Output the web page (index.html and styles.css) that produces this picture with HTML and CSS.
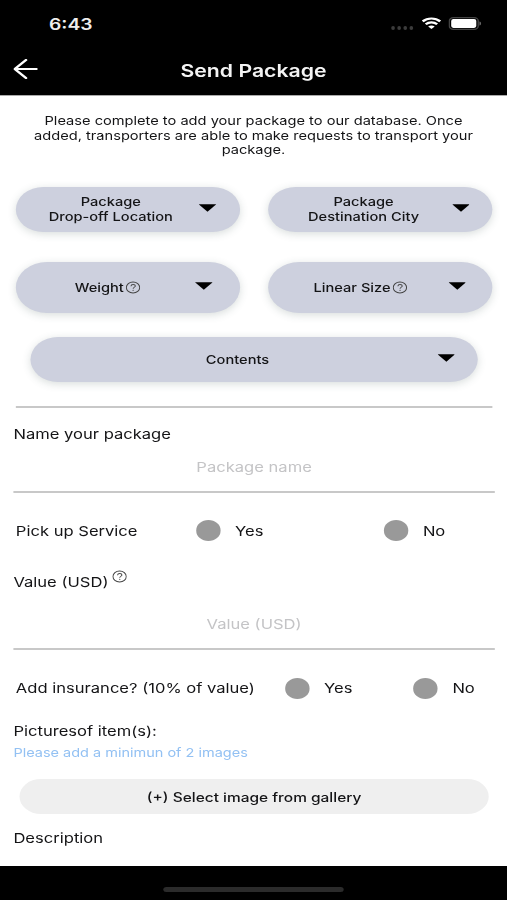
FILE: index.html
```html
<!DOCTYPE html>
<html lang="en">
<head>
<meta charset="utf-8">
<title>Send Package</title>
<link rel="stylesheet" href="styles.css">
</head>
<body>
<svg class="defs" width="0" height="0" aria-hidden="true">
  <symbol id="help" viewBox="0 0 13 13">
    <circle cx="6.5" cy="6.5" r="5.8" fill="none" stroke="currentColor" stroke-width=".9"/>
    <path d="M4.7 5.1C4.8 3.8 5.6 3.3 6.6 3.3c1.1 0 1.9.7 1.9 1.6 0 1.3-1.9 1.4-1.9 2.9" fill="none" stroke="currentColor" stroke-width=".9"/>
    <circle cx="6.6" cy="9.4" r=".6" fill="currentColor"/>
  </symbol>
  <symbol id="caret" viewBox="0 0 15 8"><path d="M0 0h15L7.5 8z"/></symbol>
</svg>
<div class="screen">
  <header class="top">
    <div class="status">
      <span class="time">6:43</span>
      <div class="signals">
        <span class="dots"><i></i><i></i><i></i><i></i></span>
        <svg class="wifi" viewBox="0 0 16 12" fill="none" stroke="#fff" stroke-width="2.2">
          <path d="M.8 4.4C4.9.5 11.1.5 15.2 4.4M3.3 7.3c2.7-2.5 6.7-2.5 9.4 0"/>
          <path d="M8 12 5.3 9.4c1.5-1.3 3.9-1.3 5.4 0z" fill="#fff" stroke="none"/>
        </svg>
        <svg class="battery" viewBox="0 0 27 13">
          <rect x=".6" y=".6" width="23.8" height="11.8" rx="3.4" fill="none" stroke="#444" stroke-width="1.2"/>
          <rect x="2.2" y="2.1" width="20.6" height="8.8" rx="1.8" fill="#fff"/>
          <path d="M25.4 4.5c1.8.6 1.8 3.4 0 4z" fill="#666"/>
        </svg>
      </div>
    </div>
    <div class="nav">
      <svg class="back" viewBox="0 0 20 20" fill="none" stroke="#fff" stroke-width="2.2" stroke-linecap="round" stroke-linejoin="round"><path d="M10.3 1 1.1 10l9.2 9M1.3 10H19"/></svg>
      <h1 class="title">Send Package</h1>
    </div>
  </header>
  <main class="form">
    <p class="intro">Please complete to add your package to our database. Once<br>added, transporters are able to make requests to transport your<br>package.</p>
    <div class="pills">
      <div class="pill"><span class="label">Package<br>Drop-off Location</span><svg class="caret"><use href="#caret"/></svg></div>
      <div class="pill"><span class="label">Package<br>Destination City</span><svg class="caret"><use href="#caret"/></svg></div>
    </div>
    <div class="pills tall">
      <div class="pill"><span class="label">Weight<svg class="help"><use href="#help"/></svg></span><svg class="caret"><use href="#caret"/></svg></div>
      <div class="pill"><span class="label">Linear Size<svg class="help"><use href="#help"/></svg></span><svg class="caret"><use href="#caret"/></svg></div>
    </div>
    <div class="pill wide"><span class="label">Contents</span><svg class="caret"><use href="#caret"/></svg></div>
    <hr class="divider">
    <div class="field">
      <div class="name">Name your package</div>
      <div class="input">Package name</div>
    </div>
    <div class="options pickup">
      <span class="question">Pick up Service</span>
      <i class="radio"></i><span class="answer">Yes</span>
      <i class="radio"></i><span class="answer last">No</span>
    </div>
    <div class="field value">
      <div class="name">Value (USD)<svg class="help"><use href="#help"/></svg></div>
      <div class="input">Value (USD)</div>
    </div>
    <div class="options insurance">
      <span class="question">Add insurance? (10% of value)</span>
      <i class="radio"></i><span class="answer">Yes</span>
      <i class="radio"></i><span class="answer last">No</span>
    </div>
    <div class="pictures">Picturesof item(s):</div>
    <div class="hint">Please add a minimun of 2 images</div>
    <div class="gallery">(+) Select image from gallery</div>
    <div class="description">Description</div>
  </main>
  <footer class="bottom"><span class="home"></span></footer>
</div>
</body>
</html>
```
FILE: styles.css
```css
* { box-sizing: border-box; }
body { margin: 0; width: 507px; height: 900px; overflow: hidden; background: #fff; }
.defs { display: block; height: 0; }

/* 416-unit wide phone screen, widened to fill the window */
.screen {
  width: 416px;
  height: 900px;
  display: flex;
  flex-direction: column;
  transform: scaleX(1.21875);
  transform-origin: 0 0;
  font-family: Inter, "Liberation Sans", sans-serif;
  color: #141416;
}

.top { height: 95px; background: #000; color: #fff; }
.status { height: 46px; padding: 2px 21px 0 40.2px; display: flex; justify-content: space-between; align-items: center; }
.time { font-size: 15.8px; font-weight: 600; color: #eee; }
.signals { display: flex; align-items: center; }
.dots { display: flex; gap: 2px; margin: 7px 7px 0 0; }
.dots i { width: 3px; height: 4px; border-radius: 50%; background: #3c3c3c; }
.wifi { width: 16px; height: 12px; margin: -2px 6px 0 0; }
.battery { width: 27px; height: 13px; margin-top: -2px; }
.nav { height: 48px; display: grid; grid-template-columns: 40px 1fr 40px; align-items: center; }
.back { width: 20px; height: 20px; margin: -2px 0 0 11px; }
.title { margin: 2px 0 0; text-align: center; font-size: 17.4px; font-weight: 600; line-height: 22px; color: #f4f4f4; }

.form { height: 771px; border-top: 1px solid #aaa; overflow: hidden; }
.intro { margin: 18px 0 0; text-align: center; font-size: 12px; line-height: 14.5px; white-space: nowrap; }

.pills { display: flex; gap: 23.5px; margin: 29px 12px 0 12.6px; }
.pill {
  width: 184px;
  height: 45.5px;
  display: flex;
  align-items: center;
  border-radius: 26px;
  background: #cdd0de;
  box-shadow: 0 2px 8px rgba(60, 85, 80, .2);
}
.label { width: 116px; margin: 1px 0 0 20.3px; text-align: center; font-size: 12px; line-height: 14.5px; font-weight: 500; white-space: nowrap; }
.caret { width: 14.5px; height: 8px; margin: -3px 0 0 14.3px; fill: #000; }
.tall { margin-top: 29.5px; }
.tall .pill { height: 51.5px; }
.tall .label { margin-left: 17.8px; }
.tall .caret { margin-left: 14px; }
.help { width: 12.3px; height: 13px; margin-left: 1.6px; vertical-align: -2px; color: #444; }
.wide { width: 367.6px; height: 45px; margin: 23.5px 0 0 24.6px; }
.wide .label { width: 300px; margin-top: 3px; }
.wide .caret { margin-left: 14px; }
.divider { height: 2px; margin: 24px 12.3px 0 13px; border: 0; background: #c8c8c8; }

.field { height: 69.5px; margin: 15.5px 10px 0 11px; padding-top: 1px; border-bottom: 2px solid #c8c8c8; }
.name, .question, .answer, .pictures, .description { font-size: 13.6px; line-height: 20px; white-space: nowrap; }
.input { margin-top: 13px; text-align: center; color: #c4c4c6; font-size: 13.6px; line-height: 20px; }
.pickup { margin-top: 27.5px; }
.options { display: flex; align-items: center; height: 21px; padding-left: 13px; }
.options > * { flex-shrink: 0; }
.radio { width: 20.3px; height: 21px; border-radius: 50%; background: #999; }
.answer { padding-left: 12px; }
.pickup .question { width: 147.6px; }
.pickup .answer { width: 133.8px; }
.value { height: 79px; margin-top: 30px; }
.value .help { margin-left: 3px; vertical-align: 4px; margin-top: -4px; }
.value .input { margin-top: 22px; }
.insurance { margin-top: 27.5px; }
.insurance .question { width: 220.6px; }
.insurance .answer { width: 85px; }
.options .last { width: auto; }
.pictures { margin: 22px 0 0 11px; }
.hint { margin: 3px 0 0 11px; color: #93c1f3; font-size: 11.9px; line-height: 17px; white-space: nowrap; }
.gallery { height: 35.5px; margin: 18px 15px 0 16px; padding-top: 1px; border-radius: 18px; background: #efefef; text-align: center; font-size: 12.7px; font-weight: 500; line-height: 35.5px; }
.description { margin: 14px 0 0 11px; }

.bottom { height: 34px; padding-top: 21px; background: #000; }
.home { display: block; width: 148px; height: 5px; margin: 0 auto; border-radius: 3px; background: #2b2b2b; }
```
